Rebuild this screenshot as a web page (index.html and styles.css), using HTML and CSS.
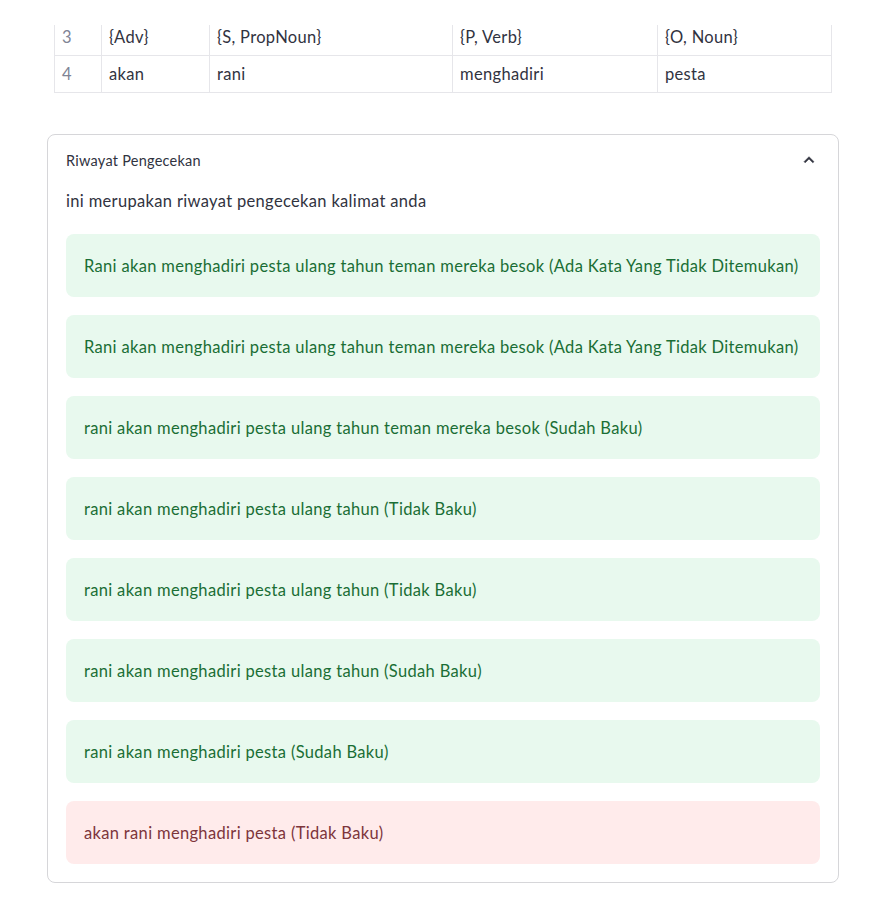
FILE: index.html
```html
<!DOCTYPE html>
<html lang="id">
<head>
<meta charset="utf-8">
<title>Riwayat Pengecekan</title>
<link rel="stylesheet" href="styles.css">
</head>
<body>
<div class="page">
  <div class="table-clip">
    <table class="df">
      <tr><td class="idx">3</td><td class="c1">{Adv}</td><td class="c2">{S, PropNoun}</td><td class="c3">{P, Verb}</td><td class="c4">{O, Noun}</td></tr>
      <tr><td class="idx">4</td><td class="c1">akan</td><td class="c2">rani</td><td class="c3">menghadiri</td><td class="c4">pesta</td></tr>
    </table>
  </div>

  <div class="expander">
    <div class="exp-head">
      <span class="exp-title">Riwayat Pengecekan</span>
      <svg class="chev" viewBox="0 0 24 24" width="20" height="20"><path d="M12 8l-6 6 1.41 1.41L12 10.83l4.59 4.58L18 14z" fill="#31333f" stroke="#31333f" stroke-width="0.6"/></svg>
    </div>
    <div class="exp-body">
      <p class="intro">ini merupakan riwayat pengecekan kalimat anda</p>
      <div class="alerts">
        <div class="alert ok">Rani akan menghadiri pesta ulang tahun teman mereka besok (Ada Kata Yang Tidak Ditemukan)</div>
        <div class="alert ok">Rani akan menghadiri pesta ulang tahun teman mereka besok (Ada Kata Yang Tidak Ditemukan)</div>
        <div class="alert ok">rani akan menghadiri pesta ulang tahun teman mereka besok (Sudah Baku)</div>
        <div class="alert ok">rani akan menghadiri pesta ulang tahun (Tidak Baku)</div>
        <div class="alert ok">rani akan menghadiri pesta ulang tahun (Tidak Baku)</div>
        <div class="alert ok">rani akan menghadiri pesta ulang tahun (Sudah Baku)</div>
        <div class="alert ok">rani akan menghadiri pesta (Sudah Baku)</div>
        <div class="alert err">akan rani menghadiri pesta (Tidak Baku)</div>
      </div>
    </div>
  </div>
</div>
</body>
</html>
```
FILE: styles.css
```css
* { box-sizing: border-box; }
html, body { margin: 0; padding: 0; background: #ffffff; }
body {
  font-family: Lato, "Liberation Sans", sans-serif;
  color: #31333f;
  font-size: 16.5px;
  letter-spacing: 0.33px;
}
.page {
  padding: 25px 0 0 0;
}
.table-clip {
  margin-left: 54px;
  width: 778px;
  height: 68px;
  overflow: hidden;
}
.df {
  border-collapse: collapse;
  margin-top: -7px;
  width: 777px;
  table-layout: fixed;
}
.df td {
  border: 1px solid #e6e6ea;
  height: 37px;
  padding: 0 7px;
  font-size: 16.5px;
  line-height: 20px;
  color: #31333f;
  white-space: nowrap;
}
.df td.idx { width: 47px; color: #808495; }
.df td.c1 { width: 108px; }
.df td.c2 { width: 243px; }
.df td.c3 { width: 205px; }
.df td.c4 { width: 174px; }

.expander {
  margin: 41px 0 0 47px;
  width: 792px;
  border: 1px solid #d6d6d9;
  border-radius: 8px;
  padding: 0 18px 18px 18px;
}
.exp-head {
  display: flex;
  align-items: center;
  justify-content: space-between;
  height: 50px;
}
.exp-title { font-size: 14.5px; letter-spacing: 0.25px; color: #31333f; }
.chev { margin-right: 1px; }
.intro {
  margin: 4px 0 21px 0;
  line-height: 24px;
}
.alerts {
  display: flex;
  flex-direction: column;
  gap: 18px;
}
.alert {
  height: 63px;
  border-radius: 8px;
  padding: 0 18px;
  display: flex;
  align-items: center;
  white-space: nowrap;
}
.alert.ok { background: #e8f9ee; color: #1a6e35; }
.alert.err { background: #ffebeb; color: #7d353b; }
```
